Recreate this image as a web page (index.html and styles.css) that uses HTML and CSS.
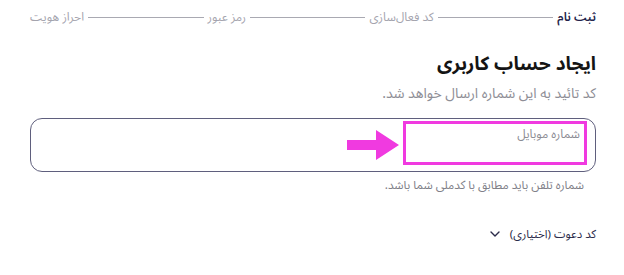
FILE: index.html
```html
<!DOCTYPE html>
<html lang="fa" dir="rtl">
<head>
<meta charset="utf-8">
<link rel="stylesheet" href="styles.css">
</head>
<body>
<div class="page">
  <div class="stepper">
    <span class="step active">ثبت نام</span>
    <span class="line"></span>
    <span class="step">کد فعال‌سازی</span>
    <span class="line"></span>
    <span class="step">رمز عبور</span>
    <span class="line"></span>
    <span class="step">احراز هویت</span>
  </div>
  <h1 class="title">ایجاد حساب کاربری</h1>
  <p class="subtitle">کد تائید به این شماره ارسال خواهد شد.</p>
  <div class="field">
    <label class="label">شماره موبایل</label>
    <div class="highlight"></div>
    <svg class="arrow" width="52" height="30" viewBox="0 0 52 30"><path d="M0 10H29V0L52 15L29 30V20H0Z" fill="#f03ae0"/></svg>
  </div>
  <p class="hint">شماره تلفن باید مطابق با کدملی شما باشد.</p>
  <div class="invite">
    <span>کد دعوت (اختیاری)</span>
    <svg class="chev" width="10" height="6" viewBox="0 0 10 6"><path d="M1 1L5 5L9 1" fill="none" stroke="#2b2b4a" stroke-width="1.4" stroke-linecap="round" stroke-linejoin="round"/></svg>
  </div>
</div>
</body>
</html>
```
FILE: styles.css
```css
html, body {
  margin: 0;
  padding: 0;
  background: #fff;
}
body {
  font-family: "Noto Sans Arabic", "DejaVu Sans", sans-serif;
  direction: rtl;
}
.page {
  width: 566px;
  margin-right: 28px;
  padding-top: 8px;
}
.stepper {
  display: flex;
  align-items: center;
  gap: 4px;
  height: 18px;
}
.step {
  font-size: 12px;
  color: #a4a4ae;
  white-space: nowrap;
}
.step.active {
  color: #23234a;
  font-weight: 600;
}
.line {
  flex: 1;
  height: 1px;
  background: #a9a9b2;
}
.title {
  margin: 26px 0 0 0;
  font-size: 19px;
  font-weight: 700;
  color: #141414;
  line-height: 24px;
}
.subtitle {
  margin: 8px 0 0 0;
  font-size: 14px;
  color: #8e8e96;
  line-height: 20px;
}
.field {
  position: relative;
  margin-top: 14px;
  height: 52px;
  border: 1.5px solid #5f5f7d;
  border-radius: 12px;
}
.label {
  position: absolute;
  right: 15px;
  top: 3px;
  font-size: 12px;
  color: #8c8c94;
}
.highlight {
  position: absolute;
  right: 8px;
  top: 2px;
  width: 178px;
  height: 38px;
  border: 3px solid #f03ae0;
}
.arrow {
  position: absolute;
  right: 196px;
  top: 11px;
}
.hint {
  margin: 5px 12px 0 0;
  font-size: 11.8px;
  color: #808088;
  line-height: 18px;
}
.invite {
  display: flex;
  align-items: center;
  gap: 10px;
  margin-top: 27px;
  font-size: 11.5px;
  color: #2b2b4a;
}
```
